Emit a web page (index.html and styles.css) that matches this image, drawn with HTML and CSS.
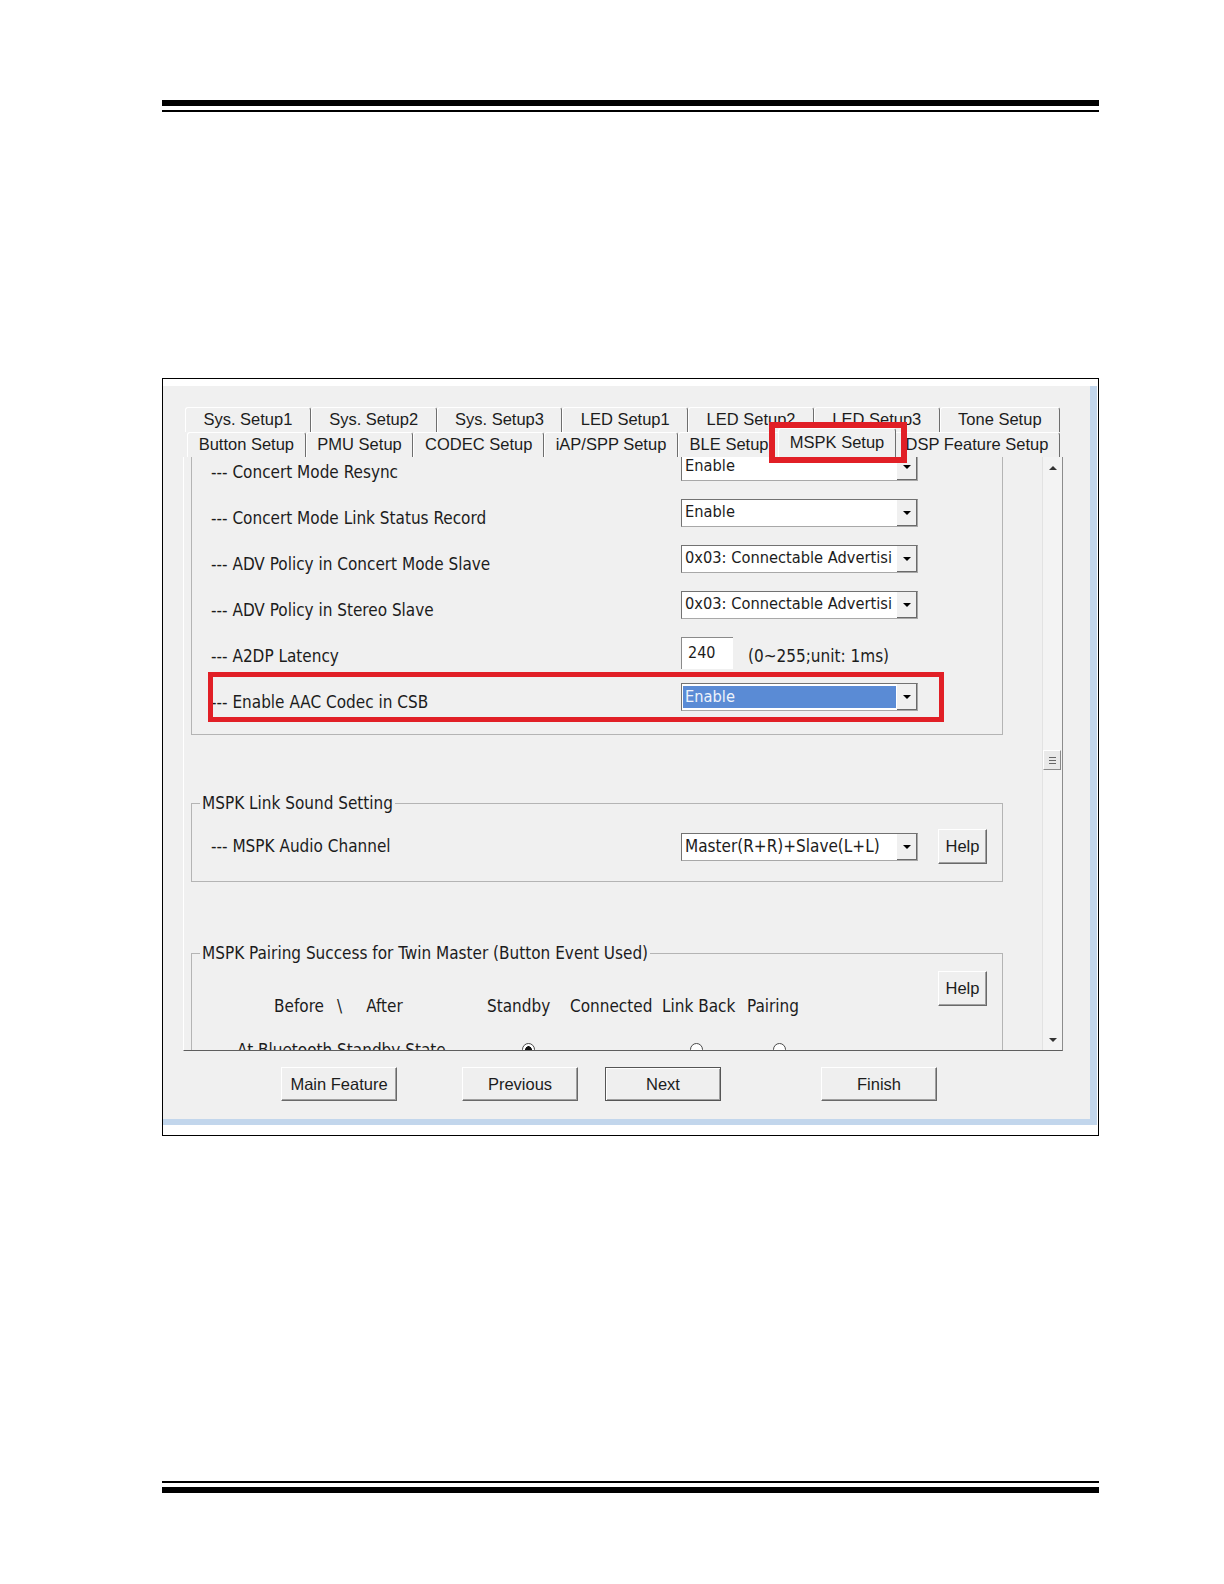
FILE: index.html
```html
<!DOCTYPE html>
<html lang="en">
<head>
    <meta charset="UTF-8">
    <meta name="viewport" content="width=device-width, initial-scale=1.0">
    <title>MSPK Setup</title>
    <link rel="stylesheet" href="styles.css">
</head>
<body>
    <div class="page">
        <div class="rule rule-top"></div>

        <div class="shot">
            <div class="window">
                <!-- Tab strip, two rows -->
                <div class="tabs">
                    <div class="tab-row">
                        <span class="tab">Sys. Setup1</span>
                        <span class="tab">Sys. Setup2</span>
                        <span class="tab">Sys. Setup3</span>
                        <span class="tab">LED Setup1</span>
                        <span class="tab">LED Setup2</span>
                        <span class="tab">LED Setup3</span>
                        <span class="tab">Tone Setup</span>
                    </div>
                    <div class="tab-row tab-row-front">
                        <span class="tab">Button Setup</span>
                        <span class="tab">PMU Setup</span>
                        <span class="tab">CODEC Setup</span>
                        <span class="tab">iAP/SPP Setup</span>
                        <span class="tab">BLE Setup</span>
                        <span class="tab active">MSPK Setup</span>
                        <span class="tab">DSP Feature Setup</span>
                    </div>
                    <div class="mark mark-tab"></div>
                </div>

                <!-- Tab page with scrolled content -->
                <div class="pane">
                    <div class="pane-view">
                        <div class="pane-content">
                            <div class="group group-concert">
                                <div class="row">
                                    <span class="label">--- Concert Mode Resync</span>
                                    <div class="combo"><span class="combo-text">Enable</span><span class="combo-btn"></span></div>
                                </div>
                                <div class="row">
                                    <span class="label">--- Concert Mode Link Status Record</span>
                                    <div class="combo"><span class="combo-text">Enable</span><span class="combo-btn"></span></div>
                                </div>
                                <div class="row">
                                    <span class="label">--- ADV Policy in Concert Mode Slave</span>
                                    <div class="combo"><span class="combo-text">0x03: Connectable Advertisi</span><span class="combo-btn"></span></div>
                                </div>
                                <div class="row">
                                    <span class="label">--- ADV Policy in Stereo Slave</span>
                                    <div class="combo"><span class="combo-text">0x03: Connectable Advertisi</span><span class="combo-btn"></span></div>
                                </div>
                                <div class="row">
                                    <span class="label">--- A2DP Latency</span>
                                    <span class="textbox">240</span>
                                    <span class="note">(0~255;unit: 1ms)</span>
                                </div>
                                <div class="row">
                                    <span class="label">--- Enable AAC Codec in CSB</span>
                                    <div class="combo selected"><span class="combo-text">Enable</span><span class="combo-btn"></span></div>
                                </div>
                                <div class="mark mark-row"></div>
                            </div>

                            <fieldset class="group group-sound">
                                <legend>MSPK Link Sound Setting</legend>
                                <div class="row-sound">
                                    <span class="label">--- MSPK Audio Channel</span>
                                    <div class="combo combo-wide"><span class="combo-text">Master(R+R)+Slave(L+L)</span><span class="combo-btn"></span></div>
                                    <button class="btn btn-help">Help</button>
                                </div>
                            </fieldset>

                            <fieldset class="group group-pair">
                                <legend>MSPK Pairing Success for Twin Master (Button Event Used)</legend>
                                <div class="pair">
                                    <div class="pair-table">
                                        <span class="head-first"><span>Before</span><span class="slash">\</span><span class="after">After</span></span>
                                        <span>Standby</span>
                                        <span>Connected</span>
                                        <span>Link Back</span>
                                        <span>Pairing</span>

                                        <span>At Bluetooth Standby State</span>
                                        <span><i class="radio checked r-standby"></i></span>
                                        <span></span>
                                        <span><i class="radio r-linkback"></i></span>
                                        <span><i class="radio r-pairing"></i></span>
                                    </div>
                                    <button class="btn btn-help">Help</button>
                                </div>
                            </fieldset>
                        </div>
                    </div>
                    <div class="scrollbar">
                        <span class="sb-arrow sb-up"></span>
                        <span class="sb-thumb"></span>
                        <span class="sb-space"></span>
                        <span class="sb-arrow sb-down"></span>
                    </div>
                </div>

                <div class="actions">
                    <button class="btn">Main Feature</button>
                    <button class="btn btn-prev">Previous</button>
                    <button class="btn btn-next">Next</button>
                    <button class="btn btn-finish">Finish</button>
                </div>
            </div>
        </div>

        <div class="rule rule-bottom"></div>
    </div>
</body>
</html>
```

FILE: styles.css
```css
/* General */
* {
    box-sizing: border-box;
}

body {
    margin: 0;
    background: #ffffff;
    color: #1c1c1c;
    font-family: 'Liberation Sans', Arial, sans-serif;
}

.page {
    width: 1099px;
    padding: 100px 0 0 162px;
}

/* Document rules */
.rule {
    height: 12px;
    border-top: 6px solid #000;
    border-bottom: 2px solid #000;
}

.rule-bottom {
    margin-top: 345px;
    border-top-width: 2px;
    border-bottom-width: 6px;
}

/* Screenshot frame */
.shot {
    margin-top: 266px;
    border: 1px solid #000;
    padding: 7px 1px 10px 0;
    background: #fff;
}

.window {
    height: 739px;
    padding-top: 21px;
    background: #f0f0f0;
    border-right: 7px solid #c2d6ec;
    border-bottom: 6px solid #c2d6ec;
}

/* Tabs */
.tabs {
    position: relative;
    margin-left: 22px;
    width: 875px;
}

.tab-row {
    display: flex;
    height: 25px;
}

.tab-row-front {
    margin-left: 2px;
    width: 873px;
}

.tab {
    flex: 1 1 auto;
    height: 25px;
    font-size: 16.5px;
    line-height: 23px;
    text-align: center;
    white-space: nowrap;
    border-top: 1px solid #fff;
    border-left: 1px solid #fff;
    border-right: 1px solid #6e6e6e;
    border-radius: 3px 3px 0 0;
}

.tab.active {
    position: relative;
    z-index: 1;
    margin: -4px -2px 0;
    height: 29px;
    line-height: 27px;
    background: #f0f0f0;
}

/* Red annotation boxes */
.mark {
    position: absolute;
    z-index: 2;
    border: 6px solid #e11f26;
}

.mark-tab {
    left: 584px;
    top: 15px;
    width: 138px;
    height: 41px;
}

.mark-row {
    left: 16px;
    top: 254px;
    width: 736px;
    height: 50px;
    border-width: 5px;
}

/* Tab page */
.pane {
    display: flex;
    margin-left: 20px;
    width: 880px;
    height: 594px;
    border-left: 1px solid #fff;
    border-right: 1px solid #8c8c8c;
    border-bottom: 1px solid #5e5e5e;
}

.pane-view {
    flex: 1;
    overflow: hidden;
}

.pane-content {
    margin-top: -40px;
    font-family: 'DejaVu Sans Condensed', 'DejaVu Sans', sans-serif;
    font-size: 17px;
}

.group {
    position: relative;
    width: 812px;
    margin: 0 0 0 7px;
    padding: 0;
    border: 1px solid #b4b4b4;
    min-inline-size: 0;
}

.group legend {
    margin-left: 8px;
    padding: 0 2px;
    line-height: 20px;
}

.group-concert {
    padding: 35px 0 5px;
}

.row {
    display: flex;
    height: 46px;
    padding-left: 19px;
}

.label {
    width: 470px;
    margin-top: 9px;
    line-height: 20px;
    white-space: nowrap;
}

/* Combo box */
.combo {
    display: flex;
    width: 237px;
    height: 28px;
    background: #fff;
    border: 1px solid #a8a8a8;
    border-top-color: #727272;
    border-left-color: #727272;
}

.combo-text {
    flex: 1;
    padding-left: 3px;
    overflow: hidden;
    white-space: nowrap;
    font-size: 16.3px;
    line-height: 24px;
}

.combo-btn {
    display: flex;
    align-items: center;
    justify-content: center;
    width: 21px;
    background: #f0f0f0;
    border-left: 1px solid #fff;
    box-shadow: inset -1px -1px 0 #6a6a6a;
}

.combo-btn::before {
    content: "";
    border-left: 4px solid transparent;
    border-right: 4px solid transparent;
    border-top: 4px solid #000;
}

.combo.selected .combo-text {
    margin: 2px 0 2px 1px;
    background: #5a8bd5;
    color: #eef3fb;
    line-height: 22px;
    padding-left: 2px;
}

.combo-wide .combo-text {
    font-size: 17px;
}

.textbox {
    width: 52px;
    height: 32px;
    padding: 5px 0 0 6px;
    background: #fff;
    border-top: 1px solid #8a8a8a;
    border-left: 1px solid #8a8a8a;
    font-size: 16px;
    line-height: 20px;
}

.note {
    margin: 9px 0 0 15px;
    line-height: 20px;
}

/* Sound group */
.group-sound {
    margin-top: 58px;
    padding-bottom: 17px;
}

.row-sound {
    display: flex;
    align-items: flex-start;
    margin-top: 16px;
    padding-left: 19px;
}

.row-sound .label {
    margin-top: 7px;
}

.row-sound .combo {
    margin-top: 4px;
}

/* Pairing group */
.group-pair {
    margin-top: 61px;
    padding: 8px 0 40px;
}

.pair {
    display: flex;
    align-items: flex-start;
}

.pair-table {
    display: grid;
    grid-template-columns: 250px 83px 92px 85px 80px;
    row-gap: 24px;
    width: 746px;
    margin-top: 25px;
    padding-left: 45px;
    line-height: 20px;
    white-space: nowrap;
}

.head-first {
    padding-left: 37px;
}

.slash {
    margin-left: 13px;
}

.after {
    margin-left: 24px;
}

.radio {
    display: inline-block;
    width: 13px;
    height: 13px;
    margin-top: 2px;
    border: 1px solid #4a4a4a;
    border-radius: 50%;
    background: #fff;
}

.radio.checked {
    background: radial-gradient(circle, #111 0 3px, #fff 3.5px);
}

.r-standby {
    margin-left: 35px;
}

.r-linkback {
    margin-left: 28px;
}

.r-pairing {
    margin-left: 26px;
}

/* Scrollbar */
.scrollbar {
    display: flex;
    flex-direction: column;
    width: 20px;
    background: #f3f3f3;
    border-left: 1px solid #e2e2e2;
}

.sb-arrow {
    display: flex;
    align-items: center;
    justify-content: center;
    height: 21px;
}

.sb-up::before {
    content: "";
    border-left: 4px solid transparent;
    border-right: 4px solid transparent;
    border-bottom: 4px solid #333;
}

.sb-down::before {
    content: "";
    border-left: 4px solid transparent;
    border-right: 4px solid transparent;
    border-top: 4px solid #333;
}

.sb-thumb {
    display: flex;
    align-items: center;
    justify-content: center;
    height: 20px;
    margin: 272px 1px 0 0;
    background: #e9e9e9;
    border: 1px solid;
    border-color: #fff #8a8a8a #8a8a8a #fff;
}

.sb-thumb::before {
    content: "";
    width: 7px;
    height: 7px;
    background: repeating-linear-gradient(#666 0 1px, transparent 1px 3px);
}

.sb-space {
    flex: 1;
}

/* Buttons */
.btn {
    width: 116px;
    height: 34px;
    padding: 0;
    font-family: 'Liberation Sans', Arial, sans-serif;
    font-size: 16.5px;
    color: #1c1c1c;
    background: #efefef;
    border: 1px solid;
    border-color: #fff #696969 #696969 #fff;
    box-shadow: inset -1px -1px 0 #a0a0a0;
}

.btn-help {
    width: 49px;
    height: 35px;
    margin-left: 20px;
}

.pair .btn-help {
    margin-left: 0;
}

.actions {
    display: flex;
    margin-top: 16px;
    padding-left: 118px;
}

.btn-prev {
    margin-left: 65px;
}

.btn-next {
    margin-left: 27px;
    border-color: #555;
    box-shadow: inset 1px 1px 0 #fff, inset -1px -1px 0 #a0a0a0;
}

.btn-finish {
    margin-left: 100px;
}
```
